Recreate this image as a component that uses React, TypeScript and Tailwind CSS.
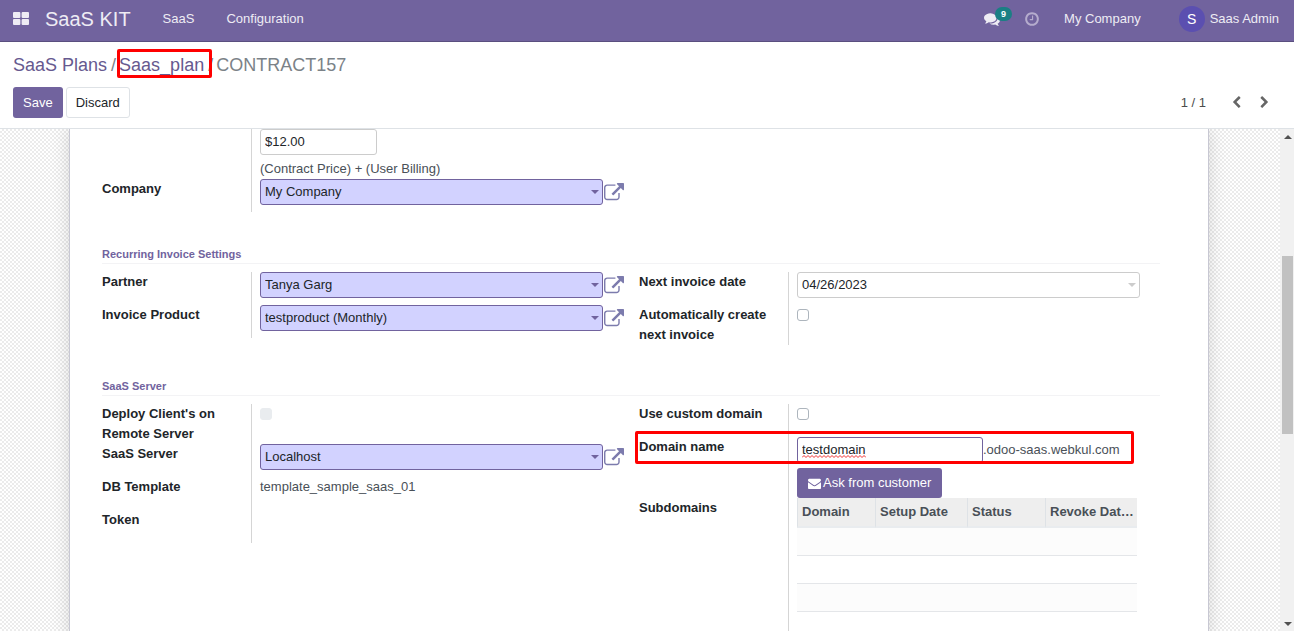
import React from "react";
import type { ReactNode } from "react";

const ICONS = {
  external:
    "M1408 928v320q0 119-84.5 203.5t-203.5 84.5h-832q-119 0-203.5-84.5t-84.5-203.5v-832q0-119 84.5-203.5t203.5-84.5h704q14 0 23 9t9 23v64q0 14-9 23t-23 9h-704q-66 0-113 47t-47 113v832q0 66 47 113t113 47h832q66 0 113-47t47-113v-320q0-14 9-23t23-9h64q14 0 23 9t9 23zm384-864v512q0 26-19 45t-45 19-45-19l-176-176-652 652q-10 10-23 10t-23-10l-114-114q-10-10-10-23t10-23l652-652-176-176q-19-19-19-45t19-45 45-19h512q26 0 45 19t19 45z",
  comments:
    "M1408 768q0 139-94 257t-256.5 186.5-353.5 68.5q-86 0-176-16-124 88-278 128-36 9-86 16h-3q-11 0-20.5-8t-11.5-21q-1-3-1-6.5t.5-6.5 2-6l2.5-5 3.5-5.5 4-5 4.5-5 4-4.5q5-6 23-25t26-29.5 22.5-29 25-38.5 20.5-44q-124-72-195-177t-71-224q0-139 94-257t256.5-186.5 353.5-68.5 353.5 68.5 256.5 186.5 94 257zm384 256q0 120-71 224.5t-195 176.5q10 24 20.5 44t25 38.5 22.5 29 26 29.5 23 25q1 1 4 4.5t4.5 5 4 5 3.5 5.5l2.5 5 2 6 .5 6.5-1 6.5q-3 14-13 22t-22 7q-50-7-86-16-154-40-278-128-90 16-176 16-271 0-472-132 58 4 88 4 161 0 309-45t264-129q125-92 192-212t67-254q0-77-23-152 129 71 204 178t75 230z",
  clock:
    "M1024 544v448q0 14-9 23t-23 9h-320q-14 0-23-9t-9-23v-64q0-14 9-23t23-9h224v-352q0-14 9-23t23-9h64q14 0 23 9t9 23zm416 352q0-148-73-273t-198-198-273-73-273 73-198 198-73 273 73 273 198 198 273 73 273-73 198-198 73-273zm224 0q0 209-103 385.5t-279.5 279.5-385.5 103-385.5-103-279.5-279.5-103-385.5 103-385.5 279.5-279.5 385.5-103 385.5 103 279.5 279.5 103 385.5z",
  envelope:
    "M1792 710v794q0 66-47 113t-113 47h-1472q-66 0-113-47t-47-113v-794q44 49 101 87 362 246 497 345 57 42 92.5 65.5t94.5 48 110 24.5h2q51 0 110-24.5t94.5-48 92.5-65.5q170-123 498-345 57-39 100-87zm0-294q0 79-49 151t-122 123q-376 261-468 325-10 7-42.5 31t-54 38.5-52 32.5-57.5 27-50 9h-2q-23 0-50-9t-57.5-27-52-32.5-54-38.5-42.5-31q-91-64-262-182.5t-205-142.5q-62-42-117-115.5t-55-136.5q0-78 41.5-130t118.5-52h1472q65 0 112.5 47t47.5 113z",
  left: "M1427 301l-531 531 531 531q19 19 19 45t-19 45l-166 166q-19 19-45 19t-45-19l-742-742q-19-19-19-45t19-45l742-742q19-19 45-19t45 19l166 166q19 19 19 45t-19 45z",
  right:
    "M1363 877l-742 742q-19 19-45 19t-45-19l-166-166q-19-19-19-45t19-45l531-531-531-531q-19-19-19-45t19-45l166-166q19-19 45-19t45 19l742 742q19 19 19 45t-19 45z",
};

function Icon({ name, className }: { name: keyof typeof ICONS; className: string }) {
  return (
    <svg viewBox="0 0 1792 1792" fill="currentColor" aria-hidden="true" className={className}>
      <path d={ICONS[name]} />
    </svg>
  );
}

function Caret({ className }: { className: string }) {
  return (
    <svg viewBox="0 0 8 4" fill="currentColor" aria-hidden="true" className={className}>
      <path d="M0 0h8L4 4z" />
    </svg>
  );
}

function SpellingMark() {
  return (
    <svg
      viewBox="0 0 64 3"
      fill="none"
      stroke="#f03030"
      aria-hidden="true"
      className="pointer-events-none absolute bottom-[5px] left-[5px] h-[3px] w-16"
    >
      <path d="M0 2.5L2 .5l2 2 2-2 2 2 2-2 2 2 2-2 2 2 2-2 2 2 2-2 2 2 2-2 2 2 2-2 2 2 2-2 2 2 2-2 2 2 2-2 2 2 2-2 2 2 2-2 2 2 2-2 2 2 2-2 2 2 2-2 2 2" />
    </svg>
  );
}

function Row({ label, id, children, marked }: { label?: string; id?: string; children?: ReactNode; marked?: boolean }) {
  return (
    <div className="relative flex min-h-[33px]">
      <div className="w-[150px] shrink-0 border-r border-[#d5d5d5] pr-4 font-bold leading-5 text-[#212529]">
        {label && (id ? <label htmlFor={id}>{label}</label> : <span>{label}</span>)}
      </div>
      <div className="min-w-0 flex-1 pl-2">{children}</div>
      {marked && (
        <div className="pointer-events-none absolute -left-1 right-[26px] -top-1.5 h-[33px] rounded-xs border-3 border-[#ff0000]" />
      )}
    </div>
  );
}

function Relation({ id, value }: { id: string; value: string }) {
  return (
    <div className="flex pb-[7px]">
      <div className="relative flex-1">
        <select
          id={id}
          defaultValue={value}
          className="block h-[26px] w-full appearance-none rounded-[3px] border border-[#71639e] bg-[#d2d2ff] px-1 text-[#212529]"
        >
          <option>{value}</option>
        </select>
        <Caret className="pointer-events-none absolute right-1 top-[11px] h-1 w-2 text-[#71639e]" />
      </div>
      <button type="button" aria-label="External link" className="flex w-5 items-center pl-px pt-0.5 text-[#7c7bad]">
        <Icon name="external" className="size-5 shrink-0" />
      </button>
    </div>
  );
}

function Check({ id, disabled }: { id: string; disabled?: boolean }) {
  return (
    <input
      id={id}
      type="checkbox"
      disabled={disabled}
      className="mt-1 block size-3 appearance-none rounded-[3px] border border-[#adb5bd] bg-white checked:bg-[#71639e] disabled:border-[#e9ecef] disabled:bg-[#e9ecef]"
    />
  );
}

function Section({ title, left, right }: { title: string; left: ReactNode; right: ReactNode }) {
  return (
    <section>
      <h2 className="mb-2 mr-4 mt-[33px] border-b border-[#f3f3f5] pb-px text-[11px] font-bold leading-4 text-[#71639e]">
        {title}
      </h2>
      <div className="grid grid-cols-2 items-start">
        <div className="pr-4">{left}</div>
        <div className="pr-4">{right}</div>
      </div>
    </section>
  );
}

function Header() {
  return (
    <header className="flex h-[42px] shrink-0 items-center border-b border-[#5a4f7f] bg-[#71639e] pb-1 pl-[13px] pr-[15px] text-[#eeecf4]">
      <button type="button" aria-label="Applications">
        <svg viewBox="0 0 16 13" fill="currentColor" className="h-[13px] w-4">
          <rect x="0" y="0" width="7.4" height="6" rx="1" />
          <rect x="8.6" y="0" width="7.4" height="6" rx="1" />
          <rect x="0" y="7" width="7.4" height="6" rx="1" />
          <rect x="8.6" y="7" width="7.4" height="6" rx="1" />
        </svg>
      </button>
      <a href="#home" className="ml-4 text-xl leading-6">
        SaaS KIT
      </a>
      <nav className="ml-8 flex gap-8">
        <a href="#saas">SaaS</a>
        <a href="#configuration">Configuration</a>
      </nav>
      <div className="ml-auto flex items-center">
        <button type="button" aria-label="Messages" className="relative">
          <Icon name="comments" className="size-4" />
          <span className="absolute -top-1 left-[11px] flex h-3.5 w-[17px] items-center justify-center rounded-full bg-[#1a7f84] text-[9px] font-bold text-white">
            9
          </span>
        </button>
        <button type="button" aria-label="Activities" className="ml-6 text-[#b5accd]">
          <Icon name="clock" className="size-4" />
        </button>
        <button type="button" className="ml-6">
          My Company
        </button>
        <button type="button" className="ml-[38px] flex items-center gap-[5px]">
          <span className="flex size-[26px] items-center justify-center rounded-full bg-[#5b4fb0] text-sm text-white">
            S
          </span>
          Saas Admin
        </button>
      </div>
    </header>
  );
}

function ControlPanel() {
  return (
    <div className="shrink-0 border-b border-[#dee2e6] bg-white px-[13px] pb-2.5 pt-[11px]">
      <nav aria-label="Breadcrumb" className="flex text-lg leading-6 text-[#7b8288]">
        <a href="#plans" className="text-[#66598f]">
          SaaS Plans
        </a>
        <span className="pl-1 pr-[3px]">/</span>
        <a href="#plan" className="relative text-[#66598f]">
          Saas_plan
          <span className="pointer-events-none absolute -left-0.5 -right-2 -top-1 h-[29px] rounded-xs border-3 border-[#ff0000]" />
        </a>
        <span className="pl-1 pr-[3px]">/</span>
        <span>CONTRACT157</span>
      </nav>
      <div className="mt-2.5 flex items-center justify-between">
        <div className="flex gap-[3px]">
          <button type="button" className="h-[31px] rounded-[3px] bg-[#71639e] px-2.5 text-white">
            Save
          </button>
          <button
            type="button"
            className="h-[31px] rounded-[3px] border border-[#dee2e6] bg-white px-[9px] text-[#212529]"
          >
            Discard
          </button>
        </div>
        <div className="flex items-center pr-2.5 text-[#4c4c4c]">
          <span>1 / 1</span>
          <button type="button" aria-label="Previous" className="ml-6 text-[#666666]">
            <Icon name="left" className="size-[13px]" />
          </button>
          <button type="button" aria-label="Next" className="ml-[15px] text-[#666666]">
            <Icon name="right" className="size-[13px]" />
          </button>
        </div>
      </div>
    </div>
  );
}

function Subdomains() {
  return (
    <table className="w-[340px] table-fixed border-separate border-spacing-0">
      <thead>
        <tr className="h-[30px] whitespace-nowrap bg-[#eeeeee] text-left text-[#495057]">
          <th className="w-[78px] border-b-2 border-l border-b-[#e9ecef] border-l-[#dee2e6] py-0 pl-1 pr-0">Domain</th>
          <th className="w-[92px] border-b-2 border-l border-b-[#e9ecef] border-l-[#dee2e6] py-0 pl-1 pr-0">Setup Date</th>
          <th className="w-[78px] border-b-2 border-l border-b-[#e9ecef] border-l-[#dee2e6] py-0 pl-1 pr-0">Status</th>
          <th className="w-[92px] border-b-2 border-l border-b-[#e9ecef] border-l-[#dee2e6] py-0 pl-1 pr-0">Revoke Dat…</th>
        </tr>
      </thead>
      <tbody>
        {[0, 1, 2, 3].map((n) => (
          <tr key={n} className="h-7 odd:bg-[#fcfcfc]">
            <td colSpan={4} className="border-b border-[#e4e6e9] p-0" />
          </tr>
        ))}
      </tbody>
    </table>
  );
}

function ScrollTrack() {
  return (
    <div aria-hidden="true" className="flex w-3.5 shrink-0 flex-col bg-[#f1f1f1] pl-0.5 pr-px">
      <div className="flex h-[15px] items-center justify-center text-[#505050]">
        <Caret className="h-1 w-2 rotate-180" />
      </div>
      <div className="flex-[112]" />
      <div className="flex-[178] bg-[#c1c1c1]" />
      <div className="flex-[182]" />
      <div className="flex h-[15px] items-center justify-center text-[#505050]">
        <Caret className="h-1 w-2" />
      </div>
    </div>
  );
}

export default function App() {
  return (
    <div className="flex h-screen flex-col overflow-hidden bg-white font-['Liberation_Sans',Arial,sans-serif] text-[13px] leading-5 text-[#495057]">
      <Header />
      <ControlPanel />
      <div className="flex min-h-0 flex-1">
        <main className="flex min-w-0 flex-1 items-start justify-center overflow-y-auto bg-[conic-gradient(#ebebeb_25%,#ffffff_0_50%,#ebebeb_0_75%,#ffffff_0)] bg-[length:4px_4px] pr-0.5 [scrollbar-width:none]">
          <form className="w-full max-w-[1140px] border-x border-[#c8c8d3] bg-white px-8 shadow-[0_0_16px_rgba(0,0,0,0.15)]">
            <div className="grid grid-cols-2 pb-px">
              <div className="pr-4">
                <Row>
                  <input
                    aria-label="Total price"
                    defaultValue="$12.00"
                    className="block h-[26px] w-[117px] rounded-[3px] border border-[#cccccc] px-1 pb-0.5 text-[#212529]"
                  />
                  <p className="pt-1">(Contract Price) + (User Billing)</p>
                </Row>
                <Row label="Company" id="company">
                  <Relation id="company" value="My Company" />
                </Row>
              </div>
            </div>
            <Section
              title="Recurring Invoice Settings"
              left={
                <>
                  <Row label="Partner" id="partner">
                    <Relation id="partner" value="Tanya Garg" />
                  </Row>
                  <Row label="Invoice Product" id="product">
                    <Relation id="product" value="testproduct (Monthly)" />
                  </Row>
                </>
              }
              right={
                <>
                  <Row label="Next invoice date" id="date">
                    <div className="relative mr-5">
                      <input
                        id="date"
                        defaultValue="04/26/2023"
                        className="block h-[26px] w-full rounded-[3px] border border-[#cccccc] px-1 pb-0.5 text-[#212529]"
                      />
                      <Caret className="pointer-events-none absolute right-1 top-[11px] h-1 w-2 text-[#cccccc]" />
                    </div>
                  </Row>
                  <Row label="Automatically create next invoice" id="auto">
                    <Check id="auto" />
                  </Row>
                </>
              }
            />
            <Section
              title="SaaS Server"
              left={
                <>
                  <Row label="Deploy Client's on Remote Server" id="remote">
                    <Check id="remote" disabled />
                  </Row>
                  <Row label="SaaS Server" id="server">
                    <Relation id="server" value="Localhost" />
                  </Row>
                  <Row label="DB Template">template_sample_saas_01</Row>
                  <Row label="Token" />
                </>
              }
              right={
                <>
                  <Row label="Use custom domain" id="custom">
                    <Check id="custom" />
                  </Row>
                  <Row label="Domain name" id="domain" marked>
                    <div className="relative flex items-center">
                      <input
                        id="domain"
                        defaultValue="testdomain"
                        spellCheck={false}
                        className="h-[26px] w-[186px] rounded-[3px] border border-[#71639e] px-1 pb-0.5 text-[#212529]"
                      />
                      <SpellingMark />
                      <span>.odoo-saas.webkul.com</span>
                    </div>
                    <button
                      type="button"
                      className="mt-[5px] flex h-[30px] items-center gap-0.5 rounded-[3px] bg-[#71639e] px-[11px] text-white"
                    >
                      <Icon name="envelope" className="size-[13px]" />
                      Ask from customer
                    </button>
                  </Row>
                  <Row label="Subdomains">
                    <Subdomains />
                  </Row>
                </>
              }
            />
          </form>
        </main>
        <ScrollTrack />
      </div>
    </div>
  );
}
